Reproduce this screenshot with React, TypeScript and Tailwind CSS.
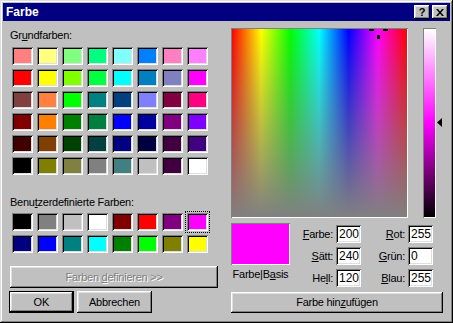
import React from "react";

const basic = [
  ["#ff8080", "#ffff80", "#80ff80", "#00ff80", "#80ffff", "#0080ff", "#ff80c0", "#ff80ff"],
  ["#ff0000", "#ffff00", "#80ff00", "#00ff40", "#00ffff", "#0080c0", "#8080c0", "#ff00ff"],
  ["#804040", "#ff8040", "#00ff00", "#008080", "#004080", "#8080ff", "#800040", "#ff0080"],
  ["#800000", "#ff8000", "#008000", "#008040", "#0000ff", "#0000a0", "#800080", "#8000ff"],
  ["#400000", "#804000", "#004000", "#004040", "#000080", "#000040", "#400040", "#400080"],
  ["#000000", "#808000", "#808040", "#808080", "#408080", "#c0c0c0", "#400040", "#ffffff"],
];

const custom = [
  ["#000000", "#808080", "#c0c0c0", "#ffffff", "#800000", "#ff0000", "#800080", "#ff00ff"],
  ["#000080", "#0000ff", "#008080", "#00ffff", "#008000", "#00ff00", "#808000", "#ffff00"],
];

const raised =
  "shadow-[inset_-1px_-1px_#000000,inset_1px_1px_#ffffff,inset_-2px_-2px_#808080,inset_2px_2px_#dfdfdf]";
const sunken =
  "shadow-[inset_1px_1px_#808080,inset_-1px_-1px_#ffffff,inset_2px_2px_#000000,inset_-2px_-2px_#dfdfdf]";

function Swatch({ c, selected }: { c: string; selected?: boolean }) {
  return (
    <div
      className={`w-[21px] h-[18px] p-[2px] ${sunken} ${
        selected ? "outline-1 outline-dotted outline-black outline-offset-1" : ""
      }`}
    >
      <div className="w-full h-full" style={{ background: c }} />
    </div>
  );
}

function Field({ label, u, rest, value }: { label: string; u: string; rest: string; value: string }) {
  return (
    <>
      <div className="h-[18px] flex items-center justify-end pr-[3px] text-[11px] leading-[13px] tracking-[-0.25px]">
        {label}
        <span className="underline">{u}</span>
        {rest}
      </div>
      <div className={`h-[18px] bg-white ${sunken} pl-[3px] flex items-center text-[12px] leading-[14px]`}>
        {value}
      </div>
    </>
  );
}

export default function App() {
  return (
    <div
      className={`w-[453px] h-[323px] bg-[#c0c0c0] p-[3px] flex flex-col text-black font-['Liberation_Sans',Arial,sans-serif] shadow-[inset_-1px_-1px_#000000,inset_1px_1px_#dfdfdf,inset_-2px_-2px_#808080,inset_2px_2px_#ffffff]`}
    >
      {/* Title bar */}
      <div className="h-[18px] bg-[#000080] flex items-center justify-between pl-[3px] pr-[2px]">
        <span className="text-white font-bold text-[12px] leading-[14px]">Farbe</span>
        <div className="flex gap-[2px]">
          <div className={`w-[16px] h-[14px] bg-[#c0c0c0] ${raised} flex items-center justify-center text-[11px] font-bold leading-none`}>
            ?
          </div>
          <div className={`w-[16px] h-[14px] bg-[#c0c0c0] ${raised} flex items-center justify-center`}>
            <svg width="8" height="7" viewBox="0 0 8 7">
              <path d="M0 0h2l2 2.5L6 0h2L5 3.5 8 7H6L4 4.5 2 7H0l3-3.5z" fill="#000" />
            </svg>
          </div>
        </div>
      </div>

      <div className="flex-1 flex">
        {/* Left column */}
        <div className="w-[210px] ml-[6px] pt-[8px] flex flex-col">
          <div className="text-[11px] leading-[13px] tracking-[-0.25px] pl-[1px]">
            Gr<span className="underline">u</span>ndfarben:
          </div>
          <div className="mt-[5px] ml-[3px] grid grid-cols-[repeat(8,21px)] gap-[4px]">
            {basic.flat().map((c, i) => (
              <Swatch key={i} c={c} />
            ))}
          </div>
          <div className="mt-[21px] text-[11px] leading-[13px] tracking-[-0.25px] pl-[1px]">
            Benu<span className="underline">t</span>zerdefinierte Farben:
          </div>
          <div className="mt-[4px] ml-[3px] grid grid-cols-[repeat(8,21px)] gap-[4px]">
            {custom.flat().map((c, i) => (
              <Swatch key={i} c={c} selected={i === 7} />
            ))}
          </div>
          <div
            className={`mt-[13px] ml-[1px] w-[208px] h-[22px] ${raised} flex items-center justify-center whitespace-pre text-[11px] text-[#808080] [text-shadow:1px_1px_0_#ffffff] tracking-[-0.25px]`}
          >
            <span>
              {"Farben "}
              <span className="underline">d</span>
              {"efinieren >>"}
            </span>
          </div>
          <div className="mt-[3px] flex gap-[3px]">
            <div className="w-[65px] h-[22px] border border-black">
              <div className={`w-full h-full ${raised} flex items-center justify-center text-[11px]`}>OK</div>
            </div>
            <div className={`w-[75px] h-[22px] ${raised} flex items-center justify-center text-[11px] tracking-[-0.25px]`}>
              Abbrechen
            </div>
          </div>
        </div>

        {/* Right column */}
        <div className="ml-[12px] pt-[7px] flex flex-col w-[212px]">
          <div className="flex">
            <div className="relative w-[177px] h-[190px] p-[1px] shadow-[inset_1px_1px_#808080,inset_-1px_-1px_#ffffff]">
              <div className="w-full h-full bg-[image:linear-gradient(to_bottom,rgba(128,128,128,0),#808080),linear-gradient(to_right,#ff0000,#ffff00,#00ff00,#00ffff,#0000ff,#ff00ff,#ff0000)]" />
              <div className="absolute left-[138px] top-[1px] w-[5px] h-[2px] bg-black" />
              <div className="absolute left-[152px] top-[1px] w-[5px] h-[2px] bg-black" />
              <div className="absolute left-[146px] top-[7px] w-[3px] h-[4px] bg-black" />
            </div>
            <div className="relative ml-[15px] w-[13px] h-[190px] p-[1px] shadow-[inset_1px_1px_#808080,inset_-1px_-1px_#ffffff]">
              <div className="w-full h-full bg-[image:linear-gradient(to_bottom,#ffffff,#ff00ff,#000000)]" />
              <svg className="absolute left-[14px] top-[90px]" width="5" height="9" viewBox="0 0 5 9">
                <path d="M0 4.5L5 0v9z" fill="#000" />
              </svg>
            </div>
          </div>

          <div className="mt-[5px] flex">
            <div className="w-[59px] flex flex-col items-center">
              <div className="w-[59px] h-[42px] p-[1px] shadow-[inset_1px_1px_#808080,inset_-1px_-1px_#ffffff]">
                <div className="w-full h-full bg-[#ff00ff]" />
              </div>
              <div className="mt-[3px] text-[11px] leading-[13px] tracking-[-0.25px]">
                Farbe|B<span className="underline">a</span>sis
              </div>
            </div>
            <div className="mt-[2px] grid grid-cols-[46px_25px_47px_25px] gap-y-[4px] h-fit">
              <Field label="" u="F" rest="arbe:" value="200" />
              <Field label="" u="R" rest="ot:" value="255" />
              <Field label="" u="S" rest="ätt:" value="240" />
              <Field label="" u="G" rest="rün:" value="0" />
              <Field label="He" u="l" rest="l:" value="120" />
              <Field label="" u="B" rest="lau:" value="255" />
            </div>
          </div>

          <div
            className={`mt-auto mb-[7px] w-[212px] h-[21px] ${raised} flex items-center justify-center text-[11px] tracking-[-0.25px]`}
          >
            Farbe hin<span className="underline">z</span>ufügen
          </div>
        </div>
      </div>
    </div>
  );
}
